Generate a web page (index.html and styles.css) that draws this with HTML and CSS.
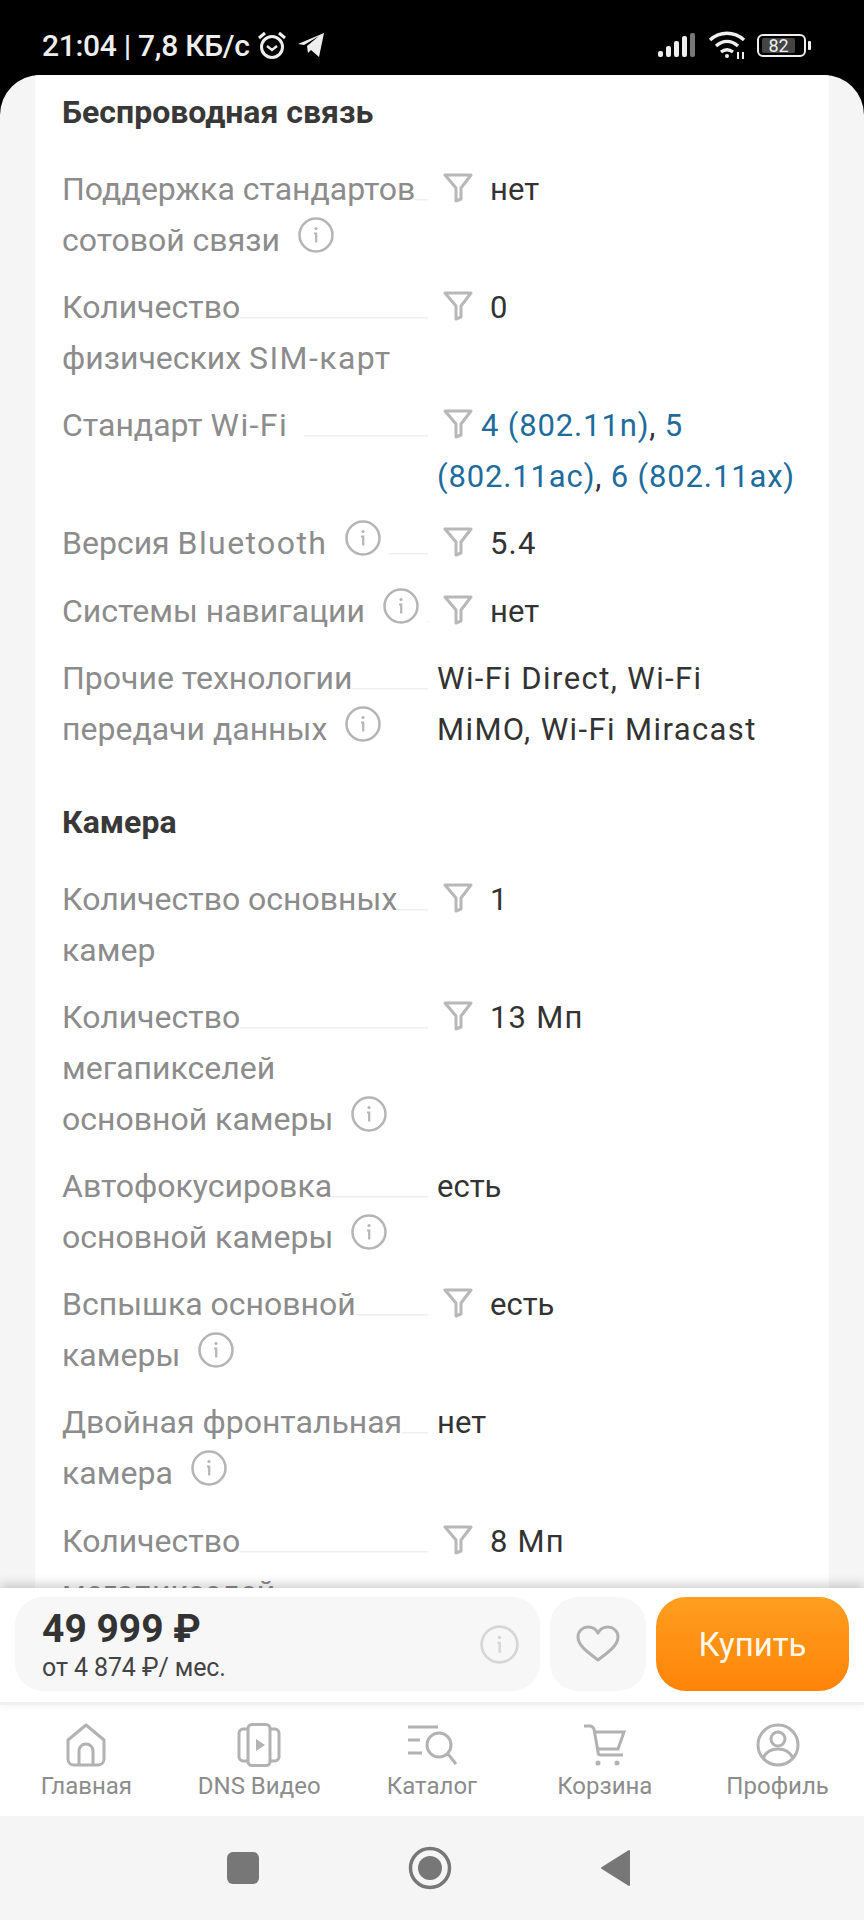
FILE: index.html
```html
<!DOCTYPE html>
<html lang="ru">
<head>
    <meta charset="UTF-8">
    <meta name="viewport" content="width=device-width, initial-scale=1.0">
    <title>Характеристики</title>
    <link rel="stylesheet" href="styles.css">
</head>
<body>
    <svg class="defs" width="0" height="0">
        <symbol id="filter" viewBox="0 0 30 30">
            <path d="M2 2h26L18 15v11l-5 2V15z" fill="none" stroke="currentColor" stroke-width="3" stroke-linejoin="round"/>
        </symbol>
        <symbol id="info" viewBox="0 0 36 36">
            <circle cx="18" cy="18" r="16.5" fill="none" stroke="currentColor" stroke-width="2.5"/>
            <circle cx="18" cy="11.5" r="1.6" fill="currentColor"/>
            <path d="M16 16.5h2.2v9" fill="none" stroke="currentColor" stroke-width="2.2"/>
        </symbol>
    </svg>

    <div class="status-bar">
        <span class="status-text">21:04 | 7,8 КБ/с</span>
        <svg class="alarm" width="30" height="30" viewBox="0 0 30 30" fill="none" stroke="#eee" stroke-width="3">
            <circle cx="15" cy="17" r="10.5"/>
            <path d="M10 16l5 4 5-4" stroke-width="2.4"/>
            <path d="M2 8l6-5M28 8l-6-5"/>
        </svg>
        <svg class="telegram" width="28" height="26" viewBox="0 0 28 26">
            <path d="M1 12L27 1l-5 24-8-7-3 3-1-7 12-10-15 9z" fill="#eee"/>
        </svg>
        <span class="status-spacer"></span>
        <svg class="signal" width="37" height="24" viewBox="0 0 37 24" fill="#eee">
            <rect x="0" y="18" width="5" height="6" rx="2"/>
            <rect x="8" y="13" width="5" height="11" rx="2"/>
            <rect x="16" y="8" width="5" height="16" rx="2"/>
            <rect x="24" y="3" width="5" height="21" rx="2"/>
            <rect x="32" y="0" width="5" height="24" rx="2" fill="#777"/>
        </svg>
        <svg class="wifi" width="38" height="28" viewBox="0 0 38 28" fill="none" stroke="#eee" stroke-width="3.4">
            <path d="M2 9c10-9 24-9 34 0M8 15c7-6 15-6 22 0M13 21c4-3 8-3 12 0"/>
            <circle cx="19" cy="25" r="2" fill="#eee" stroke="none"/>
            <path d="M30 21v7M35 21v7" stroke-width="2"/>
        </svg>
        <div class="battery"><span class="battery-level">82</span></div>
        <span class="battery-nub"></span>
    </div>

    <main class="sheet">
        <div class="card">
            <h2 class="group-title">Беспроводная связь</h2>
            <div class="row">
                <div class="label"><span class="label-text">Поддержка стандартов<br>сотовой связи <svg class="info"><use href="#info"/></svg></span></div>
                <div class="value"><svg class="filter"><use href="#filter"/></svg>нет</div>
            </div>
            <div class="row">
                <div class="label"><span class="label-text">Количество<br>физических <span class="wide">SIM-карт</span></span></div>
                <div class="value"><svg class="filter"><use href="#filter"/></svg>0</div>
            </div>
            <div class="row">
                <div class="label"><span class="label-text">Стандарт <span class="wide">Wi-Fi</span>&nbsp;&nbsp;</span></div>
                <div class="value link"><svg class="filter tight"><use href="#filter"/></svg>4 (802.11n)<span class="comma">,</span> 5<br>(802.11ac)<span class="comma">,</span> 6 (802.11ax)</div>
            </div>
            <div class="row">
                <div class="label"><span class="label-text">Версия <span class="wide">Bluetooth</span> <svg class="info"><use href="#info"/></svg></span></div>
                <div class="value num"><svg class="filter"><use href="#filter"/></svg>5.4</div>
            </div>
            <div class="row">
                <div class="label"><span class="label-text">Системы навигации <svg class="info"><use href="#info"/></svg></span></div>
                <div class="value"><svg class="filter"><use href="#filter"/></svg>нет</div>
            </div>
            <div class="row">
                <div class="label"><span class="label-text">Прочие технологии<br>передачи данных <svg class="info"><use href="#info"/></svg></span></div>
                <div class="value latin">Wi-Fi Direct, Wi-Fi<br>MiMO, Wi-Fi Miracast</div>
            </div>

            <h2 class="group-title second">Камера</h2>
            <div class="row">
                <div class="label"><span class="label-text">Количество основных<br>камер</span></div>
                <div class="value"><svg class="filter"><use href="#filter"/></svg>1</div>
            </div>
            <div class="row">
                <div class="label"><span class="label-text">Количество<br>мегапикселей<br>основной камеры <svg class="info"><use href="#info"/></svg></span></div>
                <div class="value num"><svg class="filter"><use href="#filter"/></svg>13 Мп</div>
            </div>
            <div class="row">
                <div class="label"><span class="label-text">Автофокусировка<br>основной камеры <svg class="info"><use href="#info"/></svg></span></div>
                <div class="value">есть</div>
            </div>
            <div class="row">
                <div class="label"><span class="label-text">Вспышка основной<br>камеры <svg class="info"><use href="#info"/></svg></span></div>
                <div class="value"><svg class="filter"><use href="#filter"/></svg>есть</div>
            </div>
            <div class="row">
                <div class="label"><span class="label-text">Двойная фронтальная<br>камера <svg class="info"><use href="#info"/></svg></span></div>
                <div class="value">нет</div>
            </div>
            <div class="row">
                <div class="label"><span class="label-text">Количество<br>мегапикселей</span></div>
                <div class="value num"><svg class="filter"><use href="#filter"/></svg>8 Мп</div>
            </div>
        </div>
    </main>

    <div class="buy-bar">
        <div class="price-box">
            <div class="price-info">
                <div class="price">49 999 ₽</div>
                <div class="credit">от 4 874 ₽/ мес.</div>
            </div>
            <svg class="price-icon"><use href="#info"/></svg>
        </div>
        <div class="wish-box">
            <svg width="44" height="38" viewBox="0 0 44 38" fill="none" stroke="#b0b0b0" stroke-width="3">
                <path d="M22 35C10 26 2 20 2 12 2 6 7 2 12 2c4 0 8 2 10 6 2-4 6-6 10-6 5 0 10 4 10 10 0 8-8 14-20 23z" stroke-linejoin="round"/>
            </svg>
        </div>
        <button class="buy-btn">Купить</button>
    </div>

    <nav class="tabs">
        <div class="tab">
            <svg width="44" height="44" viewBox="0 0 44 44" fill="none" stroke="#b2b2b2" stroke-width="3">
                <path d="M4 17L22 2l18 15v19c0 4-3 6-6 6H10c-3 0-6-2-6-6z" stroke-linejoin="round"/>
                <path d="M15 42V28c0-4 3-7 7-7s7 3 7 7v14"/>
            </svg>
            <span>Главная</span>
        </div>
        <div class="tab">
            <svg width="44" height="44" viewBox="0 0 44 44" fill="none" stroke="#b2b2b2" stroke-width="3">
                <rect x="11" y="1.500" width="22" height="41" rx="4"/>
                <path d="M11 6H6c-2 0-4 2-4 4v24c0 2 2 4 4 4h5M33 6h5c2 0 4 2 4 4v24c0 2-2 4-4 4h-5"/>
                <path d="M19 16l9 6-9 6z" fill="#b2b2b2" stroke="none"/>
            </svg>
            <span>DNS Видео</span>
        </div>
        <div class="tab">
            <svg width="52" height="44" viewBox="0 0 52 44" fill="none" stroke="#b2b2b2" stroke-width="3">
                <path d="M2 4h30M2 17h12M2 30h14"/>
                <circle cx="33" cy="22" r="12"/>
                <path d="M42 31l8 10"/>
            </svg>
            <span>Каталог</span>
        </div>
        <div class="tab">
            <svg width="44" height="44" viewBox="0 0 44 44" fill="none" stroke="#b2b2b2" stroke-width="3">
                <path d="M1 3h6c2 0 3 1 4 3l4 23c0 2 1 3 3 3h22M10 9h31l-6 17H14"/>
                <circle cx="15" cy="40" r="2.5" fill="#b2b2b2" stroke="none"/>
                <circle cx="34" cy="40" r="2.5" fill="#b2b2b2" stroke="none"/>
            </svg>
            <span>Корзина</span>
        </div>
        <div class="tab">
            <svg width="44" height="44" viewBox="0 0 44 44" fill="none" stroke="#b2b2b2" stroke-width="3">
                <circle cx="22" cy="22" r="20"/>
                <circle cx="22" cy="16" r="7"/>
                <path d="M7 35c3-6 8-9 15-9s12 3 15 9"/>
            </svg>
            <span>Профиль</span>
        </div>
    </nav>

    <div class="system-nav">
        <span class="sys-square"></span>
        <svg width="44" height="44" viewBox="0 0 44 44">
            <circle cx="22" cy="22" r="19.500" fill="none" stroke="#777" stroke-width="3.500"/>
            <circle cx="22" cy="22" r="12" fill="#777"/>
        </svg>
        <svg width="30" height="38" viewBox="0 0 30 38">
            <path d="M29 2v34L2 19z" fill="#777" stroke="#777" stroke-width="2" stroke-linejoin="round"/>
        </svg>
    </div>
</body>
</html>
```

FILE: styles.css
```css
* {
    box-sizing: border-box;
}
html, body {
    margin: 0;
    height: 1920px;
}
body {
    display: flex;
    flex-direction: column;
    overflow: hidden;
    background: #000;
    font-family: Roboto, "Noto Sans", sans-serif;
    color: #333;
}
.defs {
    position: absolute;
}

/* status bar */
.status-bar {
    display: flex;
    align-items: center;
    flex: none;
    height: 75px;
    padding: 30px 53px 15px 42px;
    background: #000;
    color: #eee;
}
.status-text {
    font-size: 30px;
    font-weight: 500;
    letter-spacing: -0.3px;
    margin-right: 7px;
}
.telegram {
    margin-left: 10px;
}
.status-spacer {
    flex: 1;
}
.wifi {
    margin-left: 13px;
}
.battery {
    display: flex;
    align-items: center;
    width: 49px;
    height: 23px;
    margin-left: 11px;
    padding: 2px 3px;
    border: 2px solid #eee;
    border-radius: 6px;
}
.battery-level {
    width: 33px;
    height: 100%;
    background: #444;
    border-radius: 2px;
    font-size: 18px;
    line-height: 15px;
    text-align: center;
}
.battery-nub {
    width: 3px;
    height: 9px;
    margin-left: 2px;
    background: #eee;
    border-radius: 1px;
}

/* spec list */
.sheet {
    flex: 1;
    min-height: 0;
    overflow: hidden;
    padding: 0 35px;
    background: #f5f5f5;
    border-radius: 40px 40px 0 0;
}
.card {
    padding: 12px 20px 0 27px;
    background: #fff;
}
.group-title {
    margin: 0 0 26px;
    font-size: 32px;
    font-weight: 700;
    line-height: 51px;
    color: #383838;
}
.group-title.second {
    margin-top: 26px;
}
.row {
    display: grid;
    grid-template-columns: 366px 1fr;
    column-gap: 9px;
    padding-bottom: 16.15px;
    font-size: 31px;
    line-height: 51px;
}
.label {
    background: linear-gradient(#efefef, #efefef) no-repeat 0 35px / 100% 1.5px;
    font-size: 32px;
    color: #8c8c8c;
}
.label-text {
    background: #fff;
}
.wide {
    letter-spacing: 1.4px;
}
.info {
    width: 36px;
    height: 36px;
    margin: 0 8px 0 10px;
    vertical-align: -2px;
    color: #b5b5b5;
}
.value {
    color: #333;
}
.value.link {
    color: #1e6c9c;
    letter-spacing: 0.85px;
}
.value.latin {
    letter-spacing: 1.4px;
}
.value.num {
    letter-spacing: 1.2px;
}
.comma {
    color: #333;
}
.filter {
    width: 30px;
    height: 30px;
    margin: 0 17px 0 6px;
    vertical-align: -3px;
    color: #b8b8b8;
}
.filter.tight {
    margin-right: 8px;
}

/* price and buy button */
.buy-bar {
    position: relative;
    display: flex;
    flex: none;
    gap: 10px;
    height: 117px;
    padding: 9px 15px 11px;
    background: #fff;
    border-bottom: 3px solid #f1f1f1;
    box-shadow: 0 -4px 10px rgba(0, 0, 0, 0.18);
}
.price-box {
    display: flex;
    align-items: center;
    justify-content: space-between;
    width: 525px;
    padding: 0 21px 0 27px;
    background: #f7f7f7;
    border-radius: 28px;
}
.price {
    font-size: 39px;
    font-weight: 700;
    line-height: 46px;
    margin-top: 1px;
    color: #333;
}
.credit {
    font-size: 25px;
    line-height: 32px;
    letter-spacing: -0.1px;
    color: #444;
}
.price-icon {
    width: 39px;
    height: 39px;
    color: #d6d6d6;
}
.wish-box {
    display: flex;
    align-items: center;
    justify-content: center;
    width: 96px;
    background: #f7f7f7;
    border-radius: 28px;
}
.buy-btn {
    flex: 1;
    border: none;
    border-radius: 30px;
    background: linear-gradient(#ff9e1f, #ff8409);
    color: #fff8ea;
    font-family: inherit;
    font-size: 33px;
}

/* bottom tabs */
.tabs {
    display: grid;
    grid-template-columns: repeat(5, 1fr);
    flex: none;
    height: 111px;
    padding-top: 18px;
    background: #fff;
}
.tab {
    display: flex;
    flex-direction: column;
    align-items: center;
    gap: 4px;
    font-size: 24px;
    line-height: 30px;
    color: #8c8c8c;
}
.system-nav {
    display: flex;
    align-items: center;
    justify-content: center;
    gap: 148.5px;
    flex: none;
    height: 104px;
    padding-right: 7px;
    background: #f5f5f5;
}
.sys-square {
    width: 32px;
    height: 32px;
    background: #777;
    border-radius: 6px;
}
```
